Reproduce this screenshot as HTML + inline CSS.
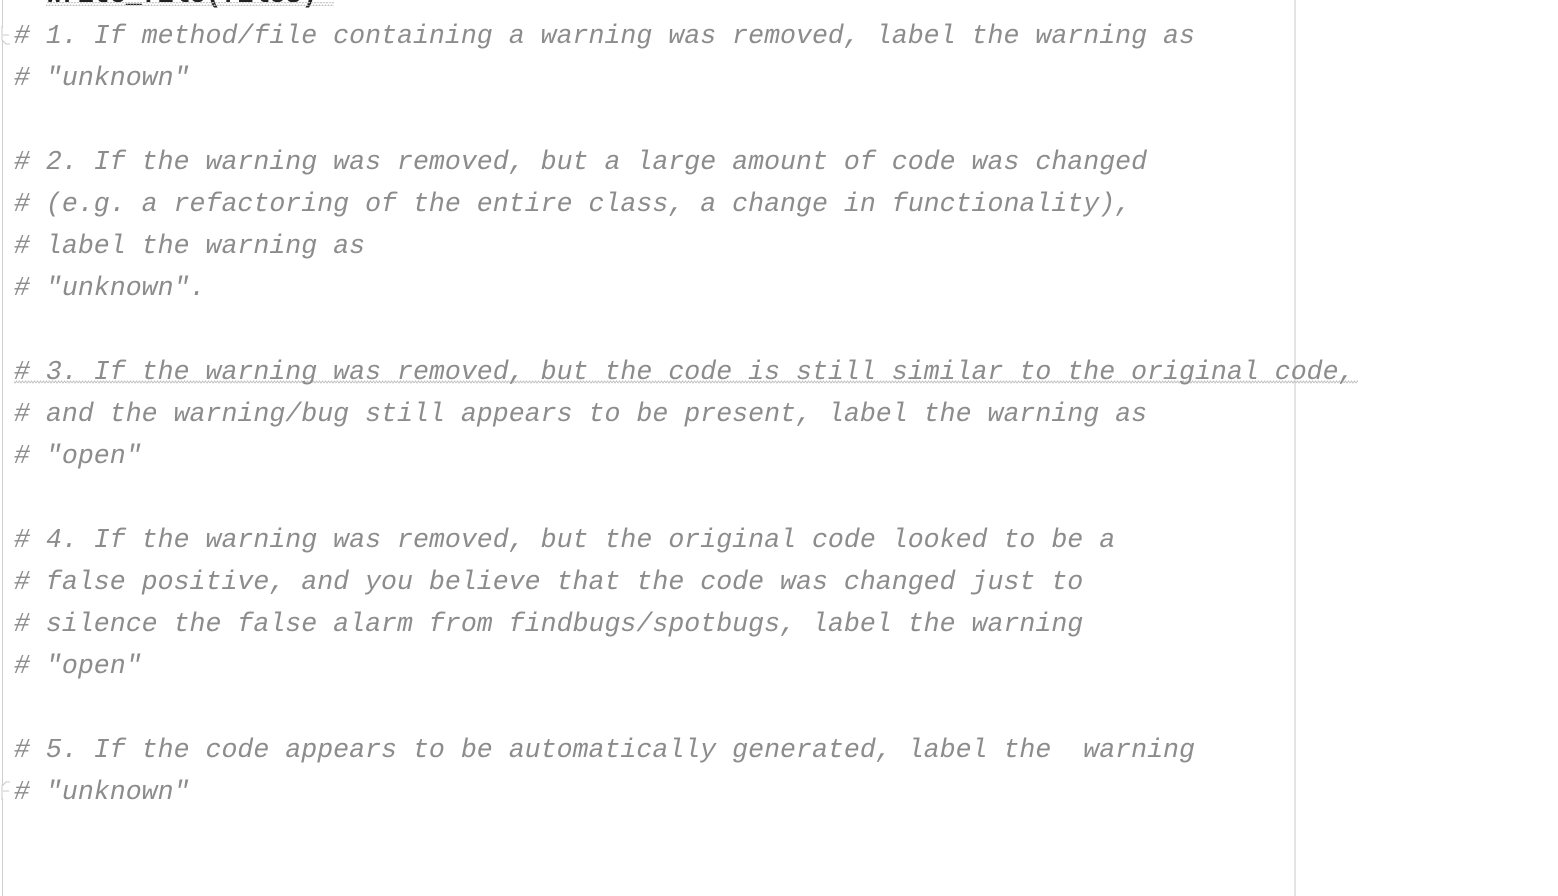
<!DOCTYPE html>
<html><head><meta charset="utf-8"><style>
html,body{margin:0;padding:0;background:#fff;width:1558px;height:896px;overflow:hidden;position:relative}
.l{position:absolute;left:14px;height:42px;line-height:42px;font-family:"Liberation Mono",monospace;font-style:italic;font-size:26.6px;color:#8c8c8c;white-space:pre}
</style></head><body>
<div style="position:absolute;left:2px;top:0;width:1px;height:896px;background:#cfcfcf"></div>
<div style="position:absolute;left:1294px;top:0;width:2px;height:896px;background:#e4e4e4"></div>
<div class="l" style="top:-26px;left:46px;color:#222;font-style:normal;font-weight:bold">write_file(files)</div>
<svg style="position:absolute;left:0;top:0" width="1558" height="400">
<defs><pattern id="w" width="6" height="4" patternUnits="userSpaceOnUse"><path d="M0 3L1.5 1L3 3L4.5 1L6 3" fill="none" stroke="#c4c4c4" stroke-width="1"/></pattern></defs>
<rect x="46" y="2" width="288" height="4" fill="url(#w)"/>
<rect x="14" y="380" width="1344" height="4" fill="url(#w)"/>
</svg>
<svg style="position:absolute;left:0;top:26px" width="14" height="20"><path d="M2 0V14L6 18H10" fill="#fff" stroke="#c8c8c8"/><path d="M3 9H9" stroke="#c8c8c8"/></svg>
<svg style="position:absolute;left:0;top:780px" width="14" height="20"><path d="M2 20V6L6 2H10" fill="#fff" stroke="#c8c8c8"/><path d="M3 11H9" stroke="#c8c8c8"/></svg>
<div class="l" style="top:15px"># 1. If method/file containing a warning was removed, label the warning as</div>
<div class="l" style="top:57px"># "unknown"</div>
<div class="l" style="top:141px"># 2. If the warning was removed, but a large amount of code was changed</div>
<div class="l" style="top:183px"># (e.g. a refactoring of the entire class, a change in functionality),</div>
<div class="l" style="top:225px"># label the warning as</div>
<div class="l" style="top:267px"># "unknown".</div>
<div class="l" style="top:351px"># 3. If the warning was removed, but the code is still similar to the original code,</div>
<div class="l" style="top:393px"># and the warning/bug still appears to be present, label the warning as</div>
<div class="l" style="top:435px"># "open"</div>
<div class="l" style="top:519px"># 4. If the warning was removed, but the original code looked to be a</div>
<div class="l" style="top:561px"># false positive, and you believe that the code was changed just to</div>
<div class="l" style="top:603px"># silence the false alarm from findbugs/spotbugs, label the warning</div>
<div class="l" style="top:645px"># "open"</div>
<div class="l" style="top:729px"># 5. If the code appears to be automatically generated, label the  warning</div>
<div class="l" style="top:771px"># "unknown"</div>
</body></html>
